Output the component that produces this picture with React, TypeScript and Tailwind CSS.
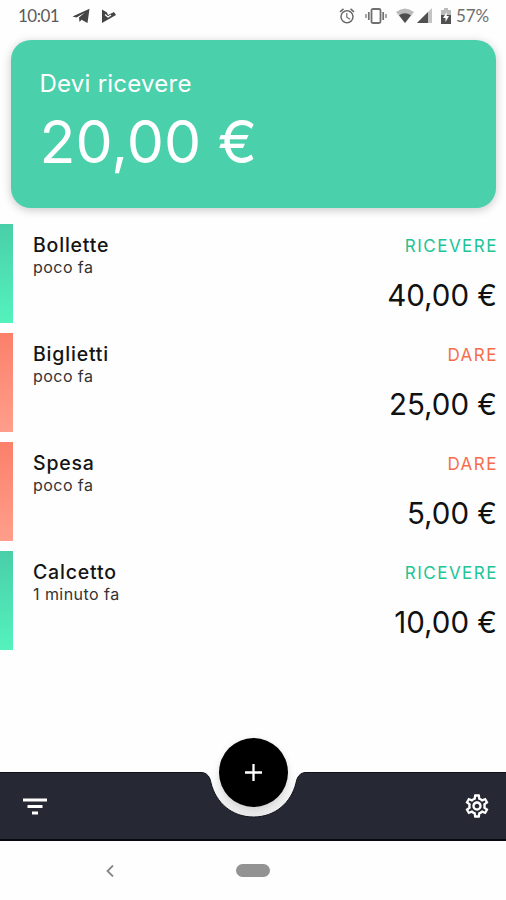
import clsx from "clsx";
import { MdOutlineAlarm, MdOutlineSettings } from "react-icons/md";

type Movement = {
  title: string;
  time: string;
  type: "RICEVERE" | "DARE";
  amount: string;
};

const movements: Movement[] = [
  { title: "Bollette", time: "poco fa", type: "RICEVERE", amount: "40,00 €" },
  { title: "Biglietti", time: "poco fa", type: "DARE", amount: "25,00 €" },
  { title: "Spesa", time: "poco fa", type: "DARE", amount: "5,00 €" },
  { title: "Calcetto", time: "1 minuto fa", type: "RICEVERE", amount: "10,00 €" },
];

const StatusBar = () => (
  <div className="flex h-10 shrink-0 items-start justify-between pl-[18px] pr-4 pt-[5px] font-['Lato',sans-serif] text-[17px] leading-[21px] text-[#5b5b5b]">
    <div className="flex items-center">
      <span className="w-[42px] whitespace-nowrap tracking-[-0.5px]">10:01</span>
      {/* telegram */}
      <svg className="ml-3 h-4 w-[18px]" viewBox="0 0 18 16" fill="#444">
        <path d="M.5 8.500 17.500 .8 15.500 15 9.500 11.800 7.500 14 7 9.600 12.500 4.800 4.500 9.500z" />
      </svg>
      {/* play check */}
      <svg className="ml-3 h-4 w-[14px]" viewBox="0 0 14 16">
        <path d="M0 1.500 5 4.500 6 7 12 4 14 7 0 15z" fill="#444" />
        <path d="m3 6.500 3 2.500 3-2" fill="none" stroke="#fff" strokeWidth="1.200" />
      </svg>
    </div>
    <div className="flex items-center">
      <MdOutlineAlarm className="mr-px size-[18px] text-[#666]" />
      {/* vibrate */}
      <svg className="ml-[8px] h-4 w-[22px]" viewBox="0 0 22 16" fill="none" stroke="#707070">
        <rect x="6.500" y="1" width="9" height="14" rx="1.500" strokeWidth="1.800" />
        <path d="M3.800 4v8M18.200 4v8" strokeWidth="1.700" />
        <path d="M1 6v4M21 6v4" strokeWidth="1.200" />
      </svg>
      {/* wifi */}
      <svg className="ml-[9px] h-[15px] w-[18px]" viewBox="0 0 18 15">
        <path d="M0 4Q9-3 18 4L9 15z" fill="#bbb" />
        <path d="M3 7.300Q9 3 15 7.300L9 15z" fill="#4d4d4d" />
      </svg>
      <svg className="ml-[3px] h-[15px] w-[15px]" viewBox="0 0 15 15">
        <path d="M0 15 15 0v15z" fill="#c4c4c4" />
        <path d="M0 15 11 4v11z" fill="#505050" />
      </svg>
      {/* battery */}
      <svg className="ml-[9px] h-4 w-[10px]" viewBox="0 0 10 16">
        <path d="M3 0h4v2h3v14H0V2h3z" fill="#bbb" />
        <path d="M0 7h10v9H0z" fill="#505050" />
        <path d="M5.700 4 2 10h2.500v4L8 8H5.700z" fill="#fff" />
      </svg>
      <span className="ml-[5px] w-[34px] whitespace-nowrap tracking-[-0.1px] text-[#707070]">57%</span>
    </div>
  </div>
);

const MovementRow = ({ title, time, type, amount }: Movement) => {
  const incoming = type === "RICEVERE";

  return (
    <li className="flex h-[99px]">
      <span
        className={clsx(
          "w-[13px] shrink-0 bg-linear-to-b",
          incoming ? "from-[#49cfa8] to-[#54f2bd]" : "from-[#fb806a] to-[#ff9e8b]"
        )}
      />
      <div className="flex flex-1 justify-between pl-5 pr-[9px] pt-[9px]">
        <div>
          <h2 className="text-[19.500px] font-medium leading-6 tracking-[0.8px] text-[#151515]">{title}</h2>
          <p className="text-[16px] leading-[21px] tracking-[0.450px] text-[#333]">{time}</p>
        </div>
        <div className="flex flex-col items-end">
          <span
            className={clsx(
              "mr-[-1px] text-[17px] leading-[26px] tracking-[1.500px]",
              incoming ? "text-[#20c496]" : "text-[#f76d4c]"
            )}
          >
            {type}
          </span>
          <span className="mt-[18px] text-[29.500px] leading-9 text-[#111]">{amount}</span>
        </div>
      </div>
    </li>
  );
};

const BottomBar = () => (
  <nav className="relative flex h-[69px] shrink-0 items-center justify-between border-b-2 border-t border-b-[#090a10] border-t-[#11131b] bg-[#262933] pl-[23px] pr-[15px]">
    <button aria-label="Filtra">
      <svg className="h-[17px] w-6" viewBox="0 0 24 17" fill="none" stroke="#fff" strokeWidth="3">
        <path d="M0 2h24M4.500 8.500h15M9 15h6" />
      </svg>
    </button>
    <button aria-label="Impostazioni">
      <MdOutlineSettings className="size-7 text-white" />
    </button>
    {/* notch behind the add button */}
    <svg className="absolute -top-[2px] left-[198px] h-[48px] w-[111px]" viewBox="0 0 111 48">
      <defs>
        <linearGradient id="notch" x1="0" y1="0" x2="0" y2="1">
          <stop offset="0" stopColor="#fefefe" />
          <stop offset="0.45" stopColor="#f4f4f4" />
          <stop offset="1" stopColor="#e8e8e8" />
        </linearGradient>
      </defs>
      <path
        d="M0 0V1.500H3C9 1.500 12 6 13 12C18 32 34 46 55.500 46S93 32 98 12C99 6 102 1.500 108 1.500H111V0z"
        fill="url(#notch)"
      />
      <path
        d="M0 1.500H3C9 1.500 12 6 13 12C18 32 34 46 55.500 46S93 32 98 12C99 6 102 1.500 108 1.500H111"
        fill="none"
        stroke="#11131b"
      />
    </svg>
    <button
      aria-label="Aggiungi"
      className="absolute -top-[35px] left-[219px] flex size-[69px] items-center justify-center rounded-full bg-black shadow-[0_2px_6px_rgba(0,0,0,0.14)]"
    >
      <svg className="size-[17px]" viewBox="0 0 17 17" stroke="#fff" strokeWidth="2.300">
        <path d="M8.500 0v17M0 8.500h17" />
      </svg>
    </button>
  </nav>
);

const App = () => {
  return (
    <div className="flex h-[900px] w-[506px] flex-col overflow-hidden bg-[#fefefe] font-['Inter',sans-serif]">
      <StatusBar />
      <section className="ml-[11px] mr-[10px] h-[168px] shrink-0 rounded-[20px] bg-[#4bd0ac] pl-[28.500px] pt-[28px] text-white shadow-[0_2px_10px_rgba(0,0,0,0.22)]">
        <p className="text-[24px] leading-8 tracking-[0.25px]">Devi ricevere</p>
        <p className="mt-[7px] text-[59px] leading-[70px]">20,00 €</p>
      </section>

      <ul className="mt-[15.600px] flex flex-1 flex-col gap-[10.300px]">
        {movements.map((movement) => (
          <MovementRow key={movement.title} {...movement} />
        ))}
      </ul>

      <BottomBar />
      {/* android navigation */}
      <div className="flex h-[59px] shrink-0 items-center pl-[106px]">
        <svg className="h-3 w-2" viewBox="0 0 8 12" fill="none" stroke="#858585" strokeWidth="1.800">
          <path d="M7 .5 1.500 6 7 11.500" />
        </svg>
        <span className="ml-[122px] h-[13px] w-[34px] rounded-full bg-[#939393]" />
      </div>
    </div>
  );
};

export default App;
